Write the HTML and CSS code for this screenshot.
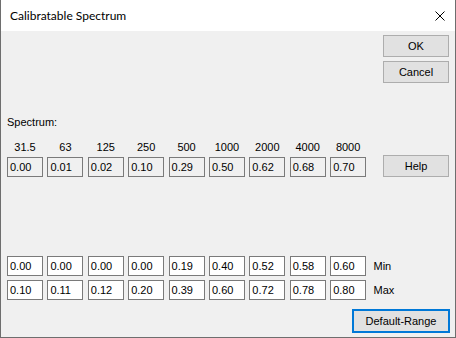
FILE: index.html
```html
<!DOCTYPE html>
<html lang="en">
<head>
  <meta charset="UTF-8">
  <title>Calibratable Spectrum</title>
  <link rel="stylesheet" href="styles.css">
</head>
<body>
<div class="window">
  <div class="titlebar">
    <span class="title">Calibratable Spectrum</span>
    <svg class="close" width="10" height="10" viewBox="0 0 10 10">
      <path d="M0.5 0.5 L9.5 9.5 M9.5 0.5 L0.5 9.5" stroke="#000" stroke-width="1" fill="none"/>
    </svg>
  </div>
  <div class="dialog">
    <div class="actions">
      <button class="btn">OK</button>
      <button class="btn">Cancel</button>
    </div>

    <div class="caption">Spectrum:</div>

    <div class="row freqs">
      <span>31.5</span><span>63</span><span>125</span><span>250</span><span>500</span>
      <span>1000</span><span>2000</span><span>4000</span><span>8000</span>
    </div>

    <div class="row values">
      <span class="field ro">0.00</span><span class="field ro">0.01</span><span class="field ro">0.02</span>
      <span class="field ro">0.10</span><span class="field ro">0.29</span><span class="field ro">0.50</span>
      <span class="field ro">0.62</span><span class="field ro">0.68</span><span class="field ro">0.70</span>
      <button class="btn help">Help</button>
    </div>

    <div class="row range first">
      <span class="field">0.00</span><span class="field">0.00</span><span class="field">0.00</span>
      <span class="field">0.00</span><span class="field">0.19</span><span class="field">0.40</span>
      <span class="field">0.52</span><span class="field">0.58</span><span class="field">0.60</span>
      <span class="tag">Min</span>
    </div>
    <div class="row range">
      <span class="field">0.10</span><span class="field">0.11</span><span class="field">0.12</span>
      <span class="field">0.20</span><span class="field">0.39</span><span class="field">0.60</span>
      <span class="field">0.72</span><span class="field">0.78</span><span class="field">0.80</span>
      <span class="tag">Max</span>
    </div>

    <div class="footer">
      <button class="btn default">Default-Range</button>
    </div>
  </div>
</div>
</body>
</html>
```

FILE: styles.css
```css
* {
  box-sizing: border-box;
}
body {
  margin: 0;
  font-family: 'Liberation Sans', Arial, sans-serif;
  font-size: 11px;
  color: #000;
}
.window {
  width: 456px;
  height: 338px;
  background: #f0f0f0;
  border: 1px solid #6e6e6e;
  border-top: none;
  display: flex;
  flex-direction: column;
}
.titlebar {
  height: 31px;
  background: #fff;
  display: flex;
  align-items: center;
  justify-content: space-between;
  padding: 0 10px 0 9px;
  flex-shrink: 0;
}
.title {
  font-family: Lato, 'Noto Sans', sans-serif;
  font-size: 12px;
}
.dialog {
  flex: 1;
  padding: 4px 6px 0 6px;
  display: flex;
  flex-direction: column;
}
.btn {
  font-family: 'Liberation Sans', Arial, sans-serif;
  font-size: 11px;
  color: #000;
  width: 66px;
  height: 22px;
  background: #e1e1e1;
  border: 1px solid #adadad;
  padding: 0;
}
.actions {
  align-self: flex-end;
  display: flex;
  flex-direction: column;
  gap: 4px;
}
.caption {
  line-height: 13px;
  margin-top: 33px;
}
.row {
  display: grid;
  grid-template-columns: repeat(9, 40.4px) 1fr;
  align-items: center;
}
.freqs {
  line-height: 13px;
  margin-top: 12px;
}
.freqs span {
  width: 36px;
  text-align: center;
}
.values {
  margin-top: 1px;
  align-items: end;
}
.field {
  width: 36px;
  height: 20px;
  line-height: 18px;
  border: 1px solid #7a7a7a;
  background: #fff;
  padding-left: 2px;
}
.field.ro {
  background: #f0f0f0;
}
.help {
  justify-self: end;
}
.range {
  margin-top: 4px;
}
.range.first {
  margin-top: 79px;
}
.tag {
  padding-left: 3px;
}
.footer {
  margin-top: 9px;
  display: flex;
  justify-content: flex-end;
  margin-right: -1px;
}
.default {
  width: 98px;
  height: 24px;
  border: 2px solid #0078d7;
}
```
